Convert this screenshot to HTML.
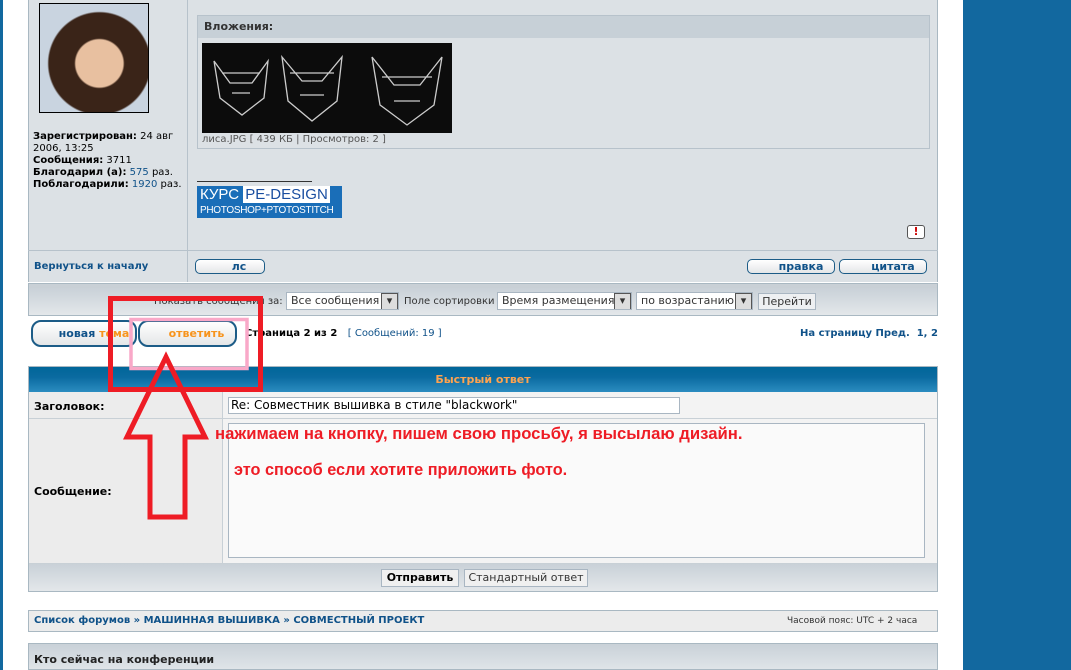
<!DOCTYPE html>
<html><head><meta charset="utf-8"><style>
*{box-sizing:border-box;margin:0;padding:0}
body{width:1071px;height:670px;overflow:hidden;background:#fff;font-family:Verdana,"DejaVu Sans","Liberation Sans",sans-serif;font-size:11px;color:#000;position:relative}
.a{position:absolute}
.gb{background:linear-gradient(#c9d1d8,#e3e7ea)}
.btn{position:absolute;border:1px solid #1c5c87;border-radius:5px;background:linear-gradient(#fff,#e4e6e8);font-weight:bold;color:#105289;font-size:11px;text-align:center}
.sel{position:absolute;height:18px;border:1px solid #a9b6c2;background:#fff;font-size:11px;padding:1px 4px;color:#333;white-space:nowrap;overflow:hidden}
.sel:after{content:"▾";position:absolute;right:0;top:0;width:15px;height:16px;background:#ddd;border:1px solid #555;font-size:11px;text-align:center;line-height:14px}
</style></head><body>
<div class="a" style="left:0;top:0;width:3px;height:670px;background:#12689f"></div>
<div class="a" style="left:963px;top:0;width:108px;height:670px;background:#12689f"></div>

<div class="a" style="left:28px;top:0;width:910px;height:282px;background:#dce1e5;border-left:1px solid #a9b8c2;border-right:1px solid #a9b8c2"></div>
<div class="a" style="left:187px;top:0;width:1px;height:282px;background:#b7c2cb"></div>
<div class="a" style="left:28px;top:250px;width:910px;height:1px;background:#b7c2cb"></div>
<div class="a" style="left:39px;top:3px;width:110px;height:110px;border:1px solid #000;background:radial-gradient(ellipse at 55% 55%,#e8c0a0 0 28%,#3a2418 30% 60%,#c9d4e0 62%)"></div>
<div class="a" style="left:33px;top:131px;font-size:10px;line-height:12px;width:155px">
<b>Зарегистрирован:</b> 24 авг 2006, 13:25<br><b>Сообщения:</b> 3711<br><b>Благодарил (а):</b> <span style="color:#105289">575</span> раз.<br><b>Поблагодарили:</b> <span style="color:#105289">1920</span> раз.</div>
<div class="a" style="left:197px;top:15px;width:733px;height:134px;border:1px solid #b7c2cb;background:#dce1e5"></div>
<div class="a" style="left:198px;top:16px;width:731px;height:22px;background:#c7d0d7;font-weight:bold;color:#333;padding:4px 6px;font-size:11px">Вложения:</div>
<div class="a" style="left:202px;top:43px;width:250px;height:90px;background:#0c0c0c">
<svg width="250" height="90"><g fill="none" stroke="#ccc" stroke-width="1.3"><path d="M12 18 L28 40 L50 40 L66 18 L62 55 L40 72 L18 55Z M20 30 L58 30 M30 50 L48 50"/><path d="M80 14 L100 38 L120 38 L140 14 L135 58 L110 78 L86 58Z M88 30 L132 30 M98 52 L122 52"/><path d="M170 14 L192 42 L218 42 L240 14 L232 62 L205 82 L178 62Z M180 34 L230 34 M192 58 L218 58"/></g></svg></div>
<div class="a" style="left:202px;top:134px;font-size:10px;color:#555">лиса.JPG [ 439 КБ | Просмотров: 2 ]</div>
<div class="a" style="left:197px;top:181px;width:115px;height:1px;background:#333"></div>
<div class="a" style="left:197px;top:186px;width:145px;height:32px;background:#1a6eb8;color:#fff;font-family:'Liberation Sans',sans-serif;line-height:14px;padding:2px 3px;font-size:15px;overflow:hidden;white-space:nowrap">КУРС <span style="background:#fff;color:#1a4ea0;padding:0 2px">PE-DESIGN</span><br><span style="font-size:10px;letter-spacing:-0.3px">PHOTOSHOP+PTOTOSTITCH</span></div>
<div class="a" style="left:907px;top:225px;width:18px;height:14px;border:1px solid #555;border-radius:3px;background:#fff;color:#c00;font-weight:bold;text-align:center;line-height:12px">!</div>
<div class="a" style="left:34px;top:261px;font-weight:bold;color:#105289;font-size:10px">Вернуться к началу</div>
<div class="btn" style="left:195px;top:259px;width:70px;height:15px;line-height:13px;padding-left:18px">лс</div>
<div class="btn" style="left:747px;top:259px;width:88px;height:15px;line-height:13px;padding-left:20px">правка</div>
<div class="btn" style="left:839px;top:259px;width:88px;height:15px;line-height:13px;padding-left:20px">цитата</div>

<div class="a" style="left:28px;top:283px;width:910px;height:33px;background:#c9d0d6;border:1px solid #a9b8c2"></div>
<div class="a gb" style="left:29px;top:288px;width:908px;height:27px"></div>
<div class="a" style="left:154px;top:296px;font-size:10px;color:#333">Показать сообщения за:</div>
<div class="sel" style="left:286px;top:292px;width:113px">Все сообщения</div>
<div class="a" style="left:404px;top:296px;font-size:10px;color:#333">Поле сортировки</div>
<div class="sel" style="left:497px;top:292px;width:135px">Время размещения</div>
<div class="sel" style="left:636px;top:292px;width:117px">по возрастанию</div>
<div class="a" style="left:758px;top:293px;width:58px;height:17px;border:1px solid #a9b6c2;background:#eef0f2;font-size:11px;color:#333;text-align:center;line-height:15px">Перейти</div>

<div class="btn" style="left:31px;top:320px;width:106px;height:27px;border-radius:10px;border-width:2px;line-height:23px;padding-left:20px;font-size:11px">новая <span style="color:#f7941d">тема</span></div>
<div class="btn" style="left:138px;top:320px;width:99px;height:27px;border-radius:10px;border-width:2px;line-height:23px;padding-left:18px;font-size:11px;color:#f7941d">ответить</div>
<div class="a" style="left:245px;top:328px;font-weight:bold;font-size:10px">Страница 2 из 2 &nbsp; <span style="font-weight:normal;font-size:10px;color:#105289">[ Сообщений: 19 ]</span></div>
<div class="a" style="left:800px;top:328px;font-weight:bold;color:#105289;font-size:10px">На страницу Пред. &nbsp;1, 2</div>

<div class="a" style="left:28px;top:366px;width:910px;height:226px;border:1px solid #a9b8c2;background:#ececec"></div>
<div class="a" style="left:29px;top:367px;width:908px;height:25px;background:linear-gradient(#006699 0,#0a6aa0 40%,#2b8cc0);color:#ffa34f;font-weight:bold;text-align:center;line-height:25px">Быстрый ответ</div>
<div class="a" style="left:222px;top:392px;width:1px;height:171px;background:#c8d0d6"></div>
<div class="a" style="left:223px;top:392px;width:714px;height:171px;background:#f3f3f3"></div>
<div class="a" style="left:29px;top:418px;width:908px;height:1px;background:#c8d0d6"></div>
<div class="a" style="left:34px;top:400px;font-weight:bold;font-size:11px">Заголовок:</div>
<div class="a" style="left:34px;top:485px;font-weight:bold;font-size:11px">Сообщение:</div>
<div class="a" style="left:228px;top:397px;width:452px;height:17px;border:1px solid #a9b6c2;background:#fff;font-size:12px;padding-left:2px;line-height:15px">Re: Совместник вышивка в стиле "blackwork"</div>
<div class="a" style="left:228px;top:423px;width:697px;height:135px;border:1px solid #a9b6c2;background:#fafafa"></div>
<div class="a gb" style="left:29px;top:563px;width:908px;height:28px;border-top:1px solid #c8d0d6"></div>
<div class="a" style="left:381px;top:569px;width:78px;height:18px;border:1px solid #a9b6c2;background:#f0f0f0;font-weight:bold;font-size:11px;text-align:center;line-height:16px">Отправить</div>
<div class="a" style="left:464px;top:569px;width:124px;height:18px;border:1px solid #a9b6c2;background:#f0f0f0;font-size:11px;text-align:center;line-height:16px;color:#333">Стандартный ответ</div>

<div class="a" style="left:28px;top:610px;width:910px;height:22px;border:1px solid #a9b8c2;background:#ececec"></div>
<div class="a" style="left:34px;top:615px;font-weight:bold;color:#105289;font-size:10px">Список форумов » МАШИННАЯ ВЫШИВКА » СОВМЕСТНЫЙ ПРОЕКТ</div>
<div class="a" style="left:787px;top:616px;font-size:9px;color:#333">Часовой пояс: UTC + 2 часа</div>
<div class="a" style="left:28px;top:643px;width:910px;height:27px;border:1px solid #a9b8c2;background:linear-gradient(#c9d1d8,#dfe4e8)"></div>
<div class="a" style="left:34px;top:653px;font-weight:bold;font-size:11px;color:#222">Кто сейчас на конференции</div>

<svg class="a" style="left:0;top:0" width="1071" height="670">
<rect x="131" y="319.5" width="116" height="49" fill="none" stroke="#f9a8c8" stroke-width="3.5"/>
<rect x="110.5" y="298.5" width="150" height="91" fill="none" stroke="#ee1c25" stroke-width="5"/>
<path d="M166 357 L127 437 L150 437 L150 517 L185 517 L185 437 L205 437 Z" fill="none" stroke="#ee1c25" stroke-width="5" stroke-linejoin="miter"/>
</svg>
<div class="a" style="left:215px;top:424px;color:#ee1c25;font-weight:bold;font-size:16.7px;font-family:'Liberation Sans',sans-serif;white-space:nowrap">нажимаем на кнопку, пишем свою просьбу, я высылаю дизайн.</div>
<div class="a" style="left:234px;top:461px;color:#ee1c25;font-weight:bold;font-size:16.3px;font-family:'Liberation Sans',sans-serif;white-space:nowrap">это способ если хотите приложить фото.</div>
</body></html>
